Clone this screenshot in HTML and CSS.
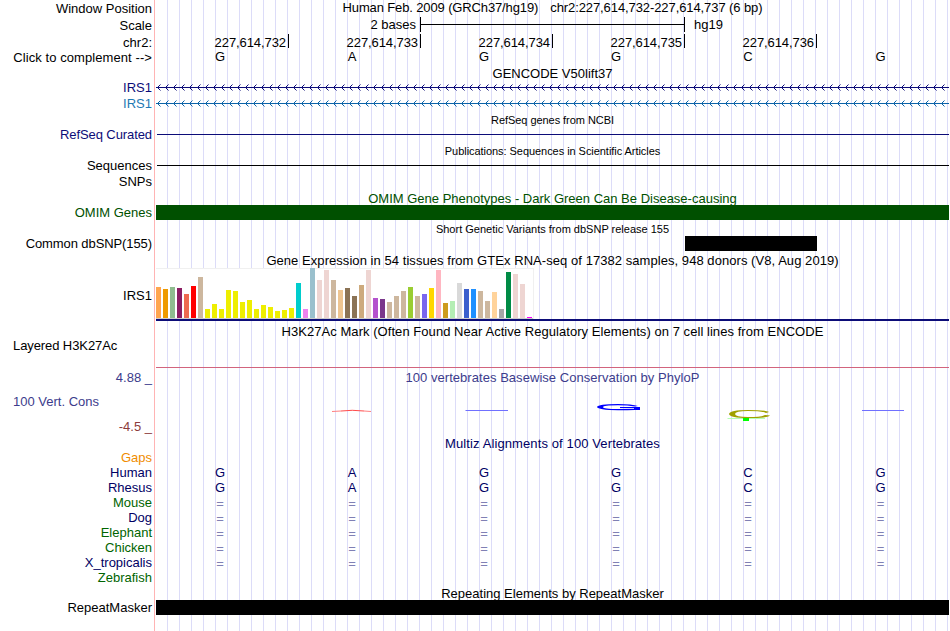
FILE: index.html
```html
<!DOCTYPE html>
<html lang="en">
<head>
<meta charset="utf-8">
<title>Genome browser chr2:227,614,732-227,614,737</title>
<link rel="stylesheet" href="styles.css">
</head>
<body>
<main class="browser">
  <div class="row h17 position"><div class="label">Window Position</div><div class="track title"><span class="assembly">Human Feb. 2009 (GRCh37/hg19)</span><span class="range">chr2:227,614,732-227,614,737 (6 bp)</span></div></div>
  <div class="row h17 scale"><div class="label">Scale</div><div class="track"><span class="scale-size">2 bases</span><span class="scale-bar"></span><span class="scale-db">hg19</span></div></div>
  <div class="row h16 ruler"><div class="label">chr2:</div><div class="track bases ticks"><span>227,614,732</span><span>227,614,733</span><span>227,614,734</span><span>227,614,735</span><span>227,614,736</span></div></div>
  <div class="row h15 sequence"><div class="label wide">Click to complement --&gt;</div><div class="track bases"><span>G</span><span>A</span><span>G</span><span>G</span><span>C</span><span>G</span></div></div>
  <div class="row h15 drop1"><div class="label"></div><div class="track title t-gencode">GENCODE V50lift37</div></div>
  <div class="row h16 navy"><div class="label">IRS1</div><svg class="track" width="793" height="16"><defs><pattern id="arrows" x="1" width="8" height="16" patternUnits="userSpaceOnUse"><path d="M0 7h1v1H0zM1 6h1v1H1zM2 5h1v1H2zM1 8h1v1H1zM2 9h1v1H2z" fill="#0c0c78"/><path d="M3 4h1v1H3zM3 10h1v1H3z" fill="#0c0c78" opacity=".5"/></pattern></defs><rect y="7" width="793" height="1" fill="#0c0c78"/><rect x="1" width="792" height="16" fill="url(#arrows)"/></svg></div>
  <div class="row h16 blue"><div class="label">IRS1</div><svg class="track" width="793" height="16"><defs><pattern id="arrows-blue" x="1" width="8" height="16" patternUnits="userSpaceOnUse"><path d="M0 7h1v1H0zM1 6h1v1H1zM2 5h1v1H2zM1 8h1v1H1zM2 9h1v1H2z" fill="#0c64a8"/><path d="M3 4h1v1H3zM3 10h1v1H3z" fill="#0c64a8" opacity=".5"/></pattern></defs><rect y="7" width="793" height="1" fill="#0c64a8"/><rect x="1" width="792" height="16" fill="url(#arrows-blue)"/></svg></div>
  <div class="row h15"><div class="label"></div><div class="track title small t-refseq">RefSeq genes from NCBI</div></div>
  <div class="row h15 navy"><div class="label snug">RefSeq Curated</div><div class="track line"></div></div>
  <div class="row h16 drop1"><div class="label"></div><div class="track title small t-pubs">Publications: Sequences in Scientific Articles</div></div>
  <div class="row h16"><div class="label">Sequences</div><div class="track line"></div></div>
  <div class="row h16"><div class="label">SNPs</div><div class="track"></div></div>
  <div class="row h15 green drop1"><div class="label"></div><div class="track title t-omim">OMIM Gene Phenotypes - Dark Green Can Be Disease-causing</div></div>
  <div class="row h16 green"><div class="label">OMIM Genes</div><div class="track"><div class="block"></div></div></div>
  <div class="row h15"><div class="label"></div><div class="track title small t-dbsnp">Short Genetic Variants from dbSNP release 155</div></div>
  <div class="row h16"><div class="label snug">Common dbSNP(155)</div><div class="track"><div class="block variant"></div></div></div>
  <div class="row h16 drop1"><div class="label"></div><div class="track title t-gtex">Gene Expression in 54 tissues from GTEx RNA-seq of 17382 samples, 948 donors (V8, Aug 2019)</div></div>
  <div class="row gtex"><div class="label">IRS1</div><div class="track">
    <div class="bars">
      <i class="adipose" style="height:31px"></i><i class="visceral" style="height:29px"></i><i class="adrenal" style="height:31px"></i><i class="aorta" style="height:30px"></i><i class="coronary" style="height:24px"></i><i class="tibial" style="height:32px"></i><i class="tan" style="height:41px"></i>
      <i class="brain" style="height:9px"></i><i class="brain" style="height:14px"></i><i class="brain" style="height:9px"></i><i class="brain" style="height:28px"></i><i class="brain" style="height:27px"></i><i class="brain" style="height:16px"></i><i class="brain" style="height:18px"></i><i class="brain" style="height:9px"></i><i class="brain" style="height:13px"></i><i class="brain" style="height:11px"></i><i class="brain" style="height:7px"></i><i class="brain" style="height:8px"></i><i class="brain" style="height:10px"></i>
      <i class="breast" style="height:35px"></i><i class="lymph" style="height:9px"></i><i class="fibro" style="height:50px"></i><i class="rose" style="height:38px"></i><i class="rose" style="height:48px"></i><i class="tan" style="height:38px"></i><i class="colon" style="height:28px"></i><i class="esoph" style="height:30px"></i><i class="esoph" style="height:22px"></i><i class="muscularis" style="height:33px"></i><i class="rose" style="height:48px"></i><i class="atrial" style="height:20px"></i><i class="ventricle" style="height:19px"></i><i class="tan" style="height:16px"></i><i class="tan" style="height:22px"></i><i class="tan" style="height:27px"></i><i class="lung" style="height:31px"></i><i class="tan" style="height:22px"></i><i class="muscle" style="height:24px"></i><i class="nerve" style="height:30px"></i><i class="ovary" style="height:48px"></i><i class="pancreas" style="height:15px"></i><i class="pituitary" style="height:17px"></i><i class="prostate" style="height:35px"></i><i class="skin" style="height:29px"></i><i class="skin-leg" style="height:29px"></i><i class="tan" style="height:27px"></i><i class="tan" style="height:17px"></i><i class="stomach" style="height:26px"></i><i class="testis" style="height:9px"></i><i class="thyroid" style="height:46px"></i><i class="rose" style="height:44px"></i><i class="rose" style="height:34px"></i><i class="blood" style="height:1px"></i>
    </div>
  </div></div>
  <div class="row h17 drop3"><div class="label"></div><div class="track title t-h3k">H3K27Ac Mark (Often Found Near Active Regulatory Elements) on 7 cell lines from ENCODE</div></div>
  <div class="row layered"><div class="label left snug">Layered H3K27Ac</div><div class="track"></div></div>
  <div class="row phylop"><div class="label"><span>4.88 _</span><span class="left">100 Vert. Cons</span><span class="low">-4.5 _</span></div><div class="track">
    <div class="title t-phylop">100 vertebrates Basewise Conservation by PhyloP</div>
    <svg class="logo" width="793" height="50" viewBox="156 385 793 50">
      <path d="M332 411.5L341 411M364 411L371 411.5" stroke="#ff8080" fill="none"/><path d="M341 411Q352 409.6 364 411" stroke="#ff4a4a" fill="none"/>
      <path d="M465.5 410.5H508M862 410.5H904" stroke="#7070ff"/>
      <path fill-rule="evenodd" fill="#00f" d="M597 407Q598 404 618 404Q632 404 638 406L635 406.6Q628 405.2 618 405.2Q603 405.2 603 407Q603 409 618 409L634 408.7V408H620V407H640V410H635Q628 410.2 618 410.2Q598 410 597 407Z"/>
      <path fill="#a0a000" d="M729 414Q730 410 748 410Q766 410 769 412L766 413Q762 411 748 411Q735 411 735 414Q735 417 748 417Q762 417 765 415L770 415.5Q767 418.2 748 418.2Q730 418 729 414Z"/>
      <path d="M727.5 418.5H765" stroke="#b4ffb4"/><path d="M743 418h6v3h-6z" fill="#0f0"/>
    </svg>
  </div></div>
  <div class="row h15 drop1 ink"><div class="label"></div><div class="track title t-multiz">Multiz Alignments of 100 Vertebrates</div></div>
  <div class="row h15 orange"><div class="label">Gaps</div><div class="track"></div></div>
  <div class="row h15 ink"><div class="label">Human</div><div class="track bases"><span>G</span><span>A</span><span>G</span><span>G</span><span>C</span><span>G</span></div></div>
  <div class="row h15 ink"><div class="label">Rhesus</div><div class="track bases"><span>G</span><span>A</span><span>G</span><span>G</span><span>C</span><span>G</span></div></div>
  <div class="row h15 forest"><div class="label">Mouse</div><div class="track bases eq"><span>=</span><span>=</span><span>=</span><span>=</span><span>=</span><span>=</span></div></div>
  <div class="row h15 ink"><div class="label">Dog</div><div class="track bases eq"><span>=</span><span>=</span><span>=</span><span>=</span><span>=</span><span>=</span></div></div>
  <div class="row h15 forest"><div class="label">Elephant</div><div class="track bases eq"><span>=</span><span>=</span><span>=</span><span>=</span><span>=</span><span>=</span></div></div>
  <div class="row h15 forest"><div class="label">Chicken</div><div class="track bases eq"><span>=</span><span>=</span><span>=</span><span>=</span><span>=</span><span>=</span></div></div>
  <div class="row h15 ink"><div class="label">X_tropicalis</div><div class="track bases eq"><span>=</span><span>=</span><span>=</span><span>=</span><span>=</span><span>=</span></div></div>
  <div class="row h15 forest"><div class="label">Zebrafish</div><div class="track"></div></div>
  <div class="row h15 drop1"><div class="label"></div><div class="track title t-repeat">Repeating Elements by RepeatMasker</div></div>
  <div class="row h16"><div class="label">RepeatMasker</div><div class="track"><div class="block"></div></div></div>
</main>
</body>
</html>
```
FILE: styles.css
```css
* { box-sizing: border-box; }
body { margin: 0; background: #fff; overflow: hidden; }
.browser {
  width: 949px; height: 631px; overflow: hidden;
  font: 13px/15px "Liberation Sans", Arial, sans-serif; color: #000;
  background:
    linear-gradient(#ffb4b4, #ffb4b4) 154px 0 / 1px 100% no-repeat,
    repeating-linear-gradient(90deg, transparent 0 11px, #dcdcf8 11px 12px) 156px 0 / 793px 100% no-repeat;
}
.row { display: grid; grid-template-columns: 152px 793px; column-gap: 4px; white-space: nowrap; }
.h15 { height: 15px; }
.h16 { height: 16px; }
.h17 { height: 17px; }
.drop1 { padding-top: 1px; }
.drop3 { padding-top: 3px; }
.label { text-align: right; }
.left { text-align: left; padding-left: 13px; }
.wide { letter-spacing: .08px; }
.snug { letter-spacing: -.09px; }
.title { text-align: center; }
.small { font-size: 11px; padding-top: 1px; }
.t-refseq, .t-pubs { letter-spacing: -.05px; }
.t-gtex { letter-spacing: .055px; }
.t-h3k { letter-spacing: .05px; }
.t-phylop { letter-spacing: .045px; }
.t-multiz { letter-spacing: .11px; }

.navy { color: #0c0c78; }
.blue { color: #1e78b4; }
.green { color: #005000; }
.ink { color: #000064; }
.forest { color: #006400; }
.orange { color: #f08c00; }

.position .label, .scale .label, .ruler .label { padding-top: 1px; }
.position .title { display: flex; justify-content: center; gap: 12px; }
.assembly { letter-spacing: -.13px; }
.range { letter-spacing: -.09px; }
.scale .track { display: flex; }
.scale-size { width: 264px; padding-right: 4px; text-align: right; }
.scale-bar { width: 265px; height: 15px; border: solid #000; border-width: 0 1px; background: linear-gradient(#000, #000) 0 7px / 100% 1px no-repeat; }
.scale-db { padding-left: 9px; }

.bases { display: grid; grid-template-columns: repeat(5, 132px) 133px; margin-left: -2px; text-align: center; }
.sequence .bases { margin-top: -1px; }
.ticks { grid-template-columns: repeat(5, 132px); margin-left: 1px; letter-spacing: -.08px; }
.ticks span { height: 14px; padding: 1px 2px 0 0; border-right: 1px solid #000; text-align: right; }
.eq { color: #8080b4; padding-top: 1px; }

.line { height: 1px; margin: 7px 0 0 1px; background: currentColor; }
.block { height: 15px; background: currentColor; }
.variant { width: 132px; margin-left: 529px; }

.gtex { height: 53px; }
.gtex .label { padding-top: 20px; }
.gtex .track { border-bottom: 2px solid #0c0c78; }
.bars { display: flex; align-items: flex-end; gap: 2px; width: 378px; height: 51px; background: linear-gradient(#f0f0f0, #f0f0f0) 0 0 / 100% 1px no-repeat, linear-gradient(#ccc, #ccc) 0 100% / 100% 1px no-repeat, #fff; box-shadow: inset -1px 0 #f0f0f0; padding-bottom: 1px; }
.bars i { flex: none; width: 5px; }
.adipose { background: #ffa54f; }
.visceral { background: #ee9a00; }
.adrenal { background: #8fbc8f; }
.aorta { background: #8b1c62; }
.coronary { background: #ee6a50; }
.tibial { background: #f00; }
.tan { background: #cdb79e; }
.brain { background: #eeee00; }
.breast { background: #00cdcd; }
.lymph { background: #ee82ee; }
.fibro { background: #9ac0cd; }
.rose { background: #eed5d2; }
.colon { background: #eec591; }
.esoph { background: #8b7355; }
.muscularis { background: #cdaa7d; }
.atrial { background: #b452cd; }
.ventricle { background: #7a378b; }
.lung { background: #9acd32; }
.muscle { background: #7a67ee; }
.nerve { background: #ffd700; }
.ovary { background: #ffb6c1; }
.pancreas { background: #cd9b1d; }
.pituitary { background: #b4eeb4; }
.prostate { background: #d9d9d9; }
.skin { background: #3a5fcd; }
.skin-leg { background: #1e90ff; }
.stomach { background: #ffd39b; }
.testis { background: #a6a6a6; }
.thyroid { background: #008b45; }
.blood { background: #f0f; }

.layered { height: 32px; }
.layered .track { height: 30px; border-bottom: 1px solid #d2647d; }
.phylop { height: 65px; color: #3c3c8c; }
.phylop .label { display: flex; flex-direction: column; }
.phylop .label .left { margin: 9px 0 10px; }
.phylop .low { color: #8c3c3c; }
.logo { display: block; }
```
